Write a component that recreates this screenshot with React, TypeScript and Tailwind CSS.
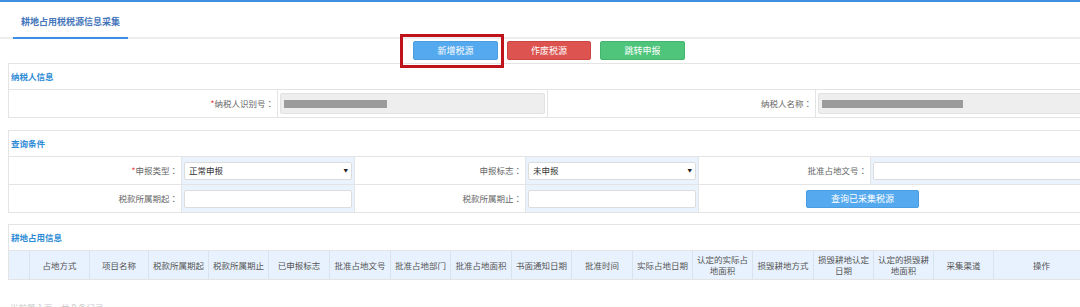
import React from "react";

const font = "font-['Noto_Sans_CJK_SC','Noto_Sans',sans-serif]";

const columns = [
  { label: "", w: "w-[21px]" },
  { label: "占地方式", w: "w-[60px]" },
  { label: "项目名称", w: "w-[59px]" },
  { label: "税款所属期起", w: "w-[60px]" },
  { label: "税款所属期止", w: "w-[60px]" },
  { label: "已申报标志", w: "w-[61px]" },
  { label: "批准占地文号", w: "w-[61px]" },
  { label: "批准占地部门", w: "w-[60px]" },
  { label: "批准占地面积", w: "w-[61px]" },
  { label: "书面通知日期", w: "w-[60px]" },
  { label: "批准时间", w: "w-[61px]" },
  { label: "实际占地日期", w: "w-[60px]" },
  { label: "认定的实际占地面积", w: "w-[60px]" },
  { label: "损毁耕地方式", w: "w-[61px]" },
  { label: "损毁耕地认定日期", w: "w-[60px]" },
  { label: "认定的损毁耕地面积", w: "w-[60px]" },
  { label: "采集渠道", w: "w-[60px]" },
  { label: "操作", w: "flex-1" },
];

const SectionHead = ({ title }: { title: string }) => (
  <div className="h-[26px] border-b border-[#e4e4e4] flex items-center pl-[2px] text-[8.5px] font-bold text-[#2d8bd6]">
    {title}
  </div>
);

const Label = ({ text, required }: { text: string; required?: boolean }) => (
  <div className="h-full flex items-center justify-end pr-[3px] border-r border-[#e4e4e4] text-[8.5px] text-[#666]">
    {required && <span className="text-[#e53935]">*</span>}
    {text}
    <span className="font-['Noto_Sans_CJK_TC',sans-serif]">：</span>
  </div>
);

const Select = ({ value }: { value: string }) => (
  <div className="h-[18px] mx-[2px] bg-white border border-[#dcdcdc] rounded-[2px] flex items-center justify-between pl-[4px] pr-[3px] text-[8.5px] text-[#333]">
    <span>{value}</span>
    <span className="text-[4.5px] text-[#222]">▼</span>
  </div>
);

const Input = () => (
  <div className="h-[18px] mx-[2px] bg-white border border-[#dcdcdc] rounded-[2px]" />
);

export default function App() {
  return (
    <div className={`relative w-[1080px] h-[307px] overflow-hidden bg-white ${font}`}>
      <div className="w-[1100px]">
        <div className="h-[2px] bg-[#3f8fe0]" />

        <div className="h-[37px] flex border-b-2 border-[#ededed]">
          <div className="ml-[13px] w-[115px] h-[37px] -mb-[2px] border-b-2 border-[#3a8ee6] flex items-center justify-center pt-[4px] text-[9px] font-bold text-[#4576bb]">
            耕地占用税税源信息采集
          </div>
        </div>

        <div className="flex gap-[9px] ml-[413px] mt-[2px]">
          <button className="w-[85px] h-[19px] rounded-[2px] bg-[#55a9ee] border border-[#4a9de0] text-white text-[9px]">新增税源</button>
          <button className="w-[84px] h-[19px] rounded-[2px] bg-[#dc5350] border border-[#cc4542] text-white text-[9px]">作废税源</button>
          <button className="w-[85px] h-[19px] rounded-[2px] bg-[#4ec57b] border border-[#44b56f] text-white text-[9px]">跳转申报</button>
        </div>

        <div className="ml-[8px] mt-[3px] w-[1082px] border border-[#e4e4e4]">
          <SectionHead title="纳税人信息" />
          <div className="h-[27px] grid grid-cols-[269px_270px_268px_1fr] items-center">
            <Label text="纳税人识别号" required />
            <div className="h-full flex items-center border-r border-[#e4e4e4] px-[2px]">
              <div className="w-full h-[21px] bg-[#eeeeee] border border-[#e2e2e2] rounded-[2px] flex items-center pl-[3px]">
                <div className="w-[103px] h-[8px] bg-[#9b9b9b]" />
              </div>
            </div>
            <Label text="纳税人名称" />
            <div className="h-full flex items-center px-[2px]">
              <div className="w-full h-[21px] bg-[#eeeeee] border border-[#e2e2e2] rounded-[2px] flex items-center pl-[3px]">
                <div className="w-[141px] h-[8px] bg-[#9b9b9b]" />
              </div>
            </div>
          </div>
        </div>

        <div className="ml-[8px] mt-[12px] w-[1082px] border border-[#e4e4e4]">
          <SectionHead title="查询条件" />
          <div className="h-[28px] grid grid-cols-[173px_173px_171px_173px_172px_1fr] border-b border-[#e4e4e4]">
            <Label text="申报类型" required />
            <div className="h-full flex flex-col justify-center bg-[#eaf3fd] border-r border-[#e4e4e4]">
              <Select value="正常申报" />
            </div>
            <Label text="申报标志" />
            <div className="h-full flex flex-col justify-center bg-[#eaf3fd] border-r border-[#e4e4e4]">
              <Select value="未申报" />
            </div>
            <Label text="批准占地文号" />
            <div className="h-full flex flex-col justify-center bg-[#eaf3fd]">
              <Input />
            </div>
          </div>
          <div className="h-[27px] grid grid-cols-[173px_173px_171px_173px_1fr]">
            <Label text="税款所属期起" />
            <div className="h-full flex flex-col justify-center bg-[#eaf3fd] border-r border-[#e4e4e4]">
              <Input />
            </div>
            <Label text="税款所属期止" />
            <div className="h-full flex flex-col justify-center bg-[#eaf3fd] border-r border-[#e4e4e4]">
              <Input />
            </div>
            <div className="h-full flex items-center pl-[107px]">
              <button className="w-[113px] h-[18px] rounded-[2px] bg-[#55a9ee] border border-[#4a9de0] text-white text-[9px]">
                查询已采集税源
              </button>
            </div>
          </div>
        </div>

        <div className="ml-[8px] mt-[11px] w-[1082px] border border-[#e4e4e4]">
          <SectionHead title="耕地占用信息" />
          <div className="h-[28px] flex bg-[#e8f2fe]">
            {columns.map((c, i) => (
              <div
                key={i}
                className={`${c.w} h-full flex items-center justify-center text-center px-[2px] text-[8.5px] leading-[11px] text-[#555] ${
                  i < columns.length - 1 ? "border-r border-[#d9e3ee]" : ""
                }`}
              >
                {c.label}
              </div>
            ))}
          </div>
        </div>

        <div className="ml-[10px] mt-[21px] text-[8.5px] leading-[12px] text-[#c8c8c8]">
          当前第 1 页，共 0 条记录
        </div>
      </div>

      <div className="absolute left-[400px] top-[34px] w-[104px] h-[34px] border-[3px] border-[#c0121a]" />
    </div>
  );
}
